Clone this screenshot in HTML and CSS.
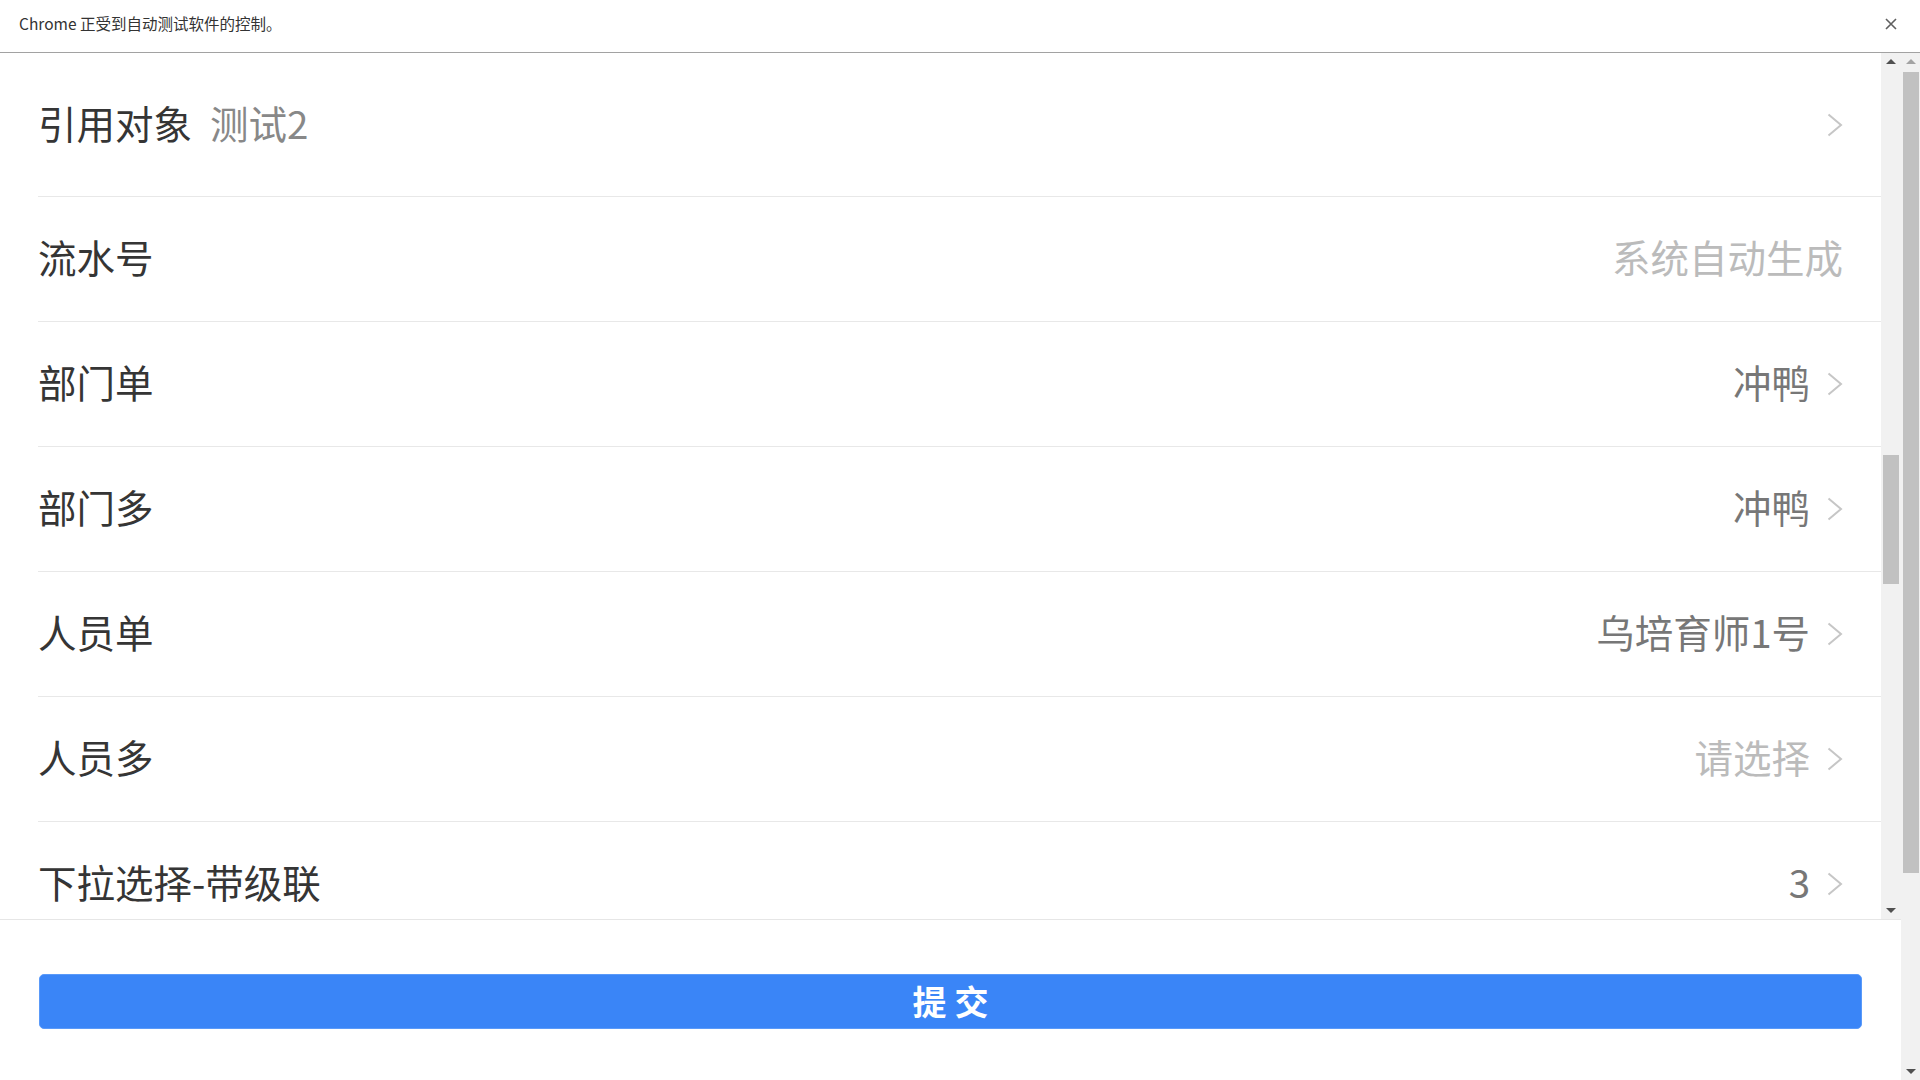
FILE: index.html
```html
<!DOCTYPE html>
<html lang="zh-CN">
<head>
<meta charset="utf-8">
<title>表单</title>
<link rel="stylesheet" href="styles.css">
</head>
<body>
<div class="infobar">
  <span class="infobar-text">Chrome 正受到自动测试软件的控制。</span>
  <svg class="infobar-close" width="12" height="12" viewBox="0 0 12 12"><path d="M1 1L11 11M11 1L1 11" stroke="#5f5f5f" stroke-width="1.6" fill="none"/></svg>
</div>
<div class="window">
  <div class="page">
    <div class="list-wrap">
      <div class="list">
        <div class="item item-first">
          <div class="item-inner">
            <span class="label">引用对象</span>
            <span class="inline-value">测试2</span>
            <span class="spacer"></span>
            <svg class="chevron" width="16" height="24" viewBox="0 0 16 24"><polyline points="1.5,1.5 14,12 1.5,22.5" fill="none" stroke="#c6c6c6" stroke-width="2"/></svg>
          </div>
        </div>
        <div class="item">
          <div class="item-inner">
            <span class="label">流水号</span>
            <span class="spacer"></span>
            <span class="value placeholder">系统自动生成</span>
          </div>
        </div>
        <div class="item">
          <div class="item-inner">
            <span class="label">部门单</span>
            <span class="spacer"></span>
            <span class="value">冲鸭</span>
            <svg class="chevron" width="16" height="24" viewBox="0 0 16 24"><polyline points="1.5,1.5 14,12 1.5,22.5" fill="none" stroke="#c6c6c6" stroke-width="2"/></svg>
          </div>
        </div>
        <div class="item">
          <div class="item-inner">
            <span class="label">部门多</span>
            <span class="spacer"></span>
            <span class="value">冲鸭</span>
            <svg class="chevron" width="16" height="24" viewBox="0 0 16 24"><polyline points="1.5,1.5 14,12 1.5,22.5" fill="none" stroke="#c6c6c6" stroke-width="2"/></svg>
          </div>
        </div>
        <div class="item">
          <div class="item-inner">
            <span class="label">人员单</span>
            <span class="spacer"></span>
            <span class="value">乌培育师1号</span>
            <svg class="chevron" width="16" height="24" viewBox="0 0 16 24"><polyline points="1.5,1.5 14,12 1.5,22.5" fill="none" stroke="#c6c6c6" stroke-width="2"/></svg>
          </div>
        </div>
        <div class="item">
          <div class="item-inner">
            <span class="label">人员多</span>
            <span class="spacer"></span>
            <span class="value placeholder">请选择</span>
            <svg class="chevron" width="16" height="24" viewBox="0 0 16 24"><polyline points="1.5,1.5 14,12 1.5,22.5" fill="none" stroke="#c6c6c6" stroke-width="2"/></svg>
          </div>
        </div>
        <div class="item">
          <div class="item-inner">
            <span class="label">下拉选择-带级联</span>
            <span class="spacer"></span>
            <span class="value">3</span>
            <svg class="chevron" width="16" height="24" viewBox="0 0 16 24"><polyline points="1.5,1.5 14,12 1.5,22.5" fill="none" stroke="#c6c6c6" stroke-width="2"/></svg>
          </div>
        </div>
      </div>
      <div class="vscroll vscroll-inner">
        <div class="vs-btn"><span class="arrow-up"></span></div>
        <div class="vs-track"><div class="vs-thumb thumb-inner"></div></div>
        <div class="vs-btn"><span class="arrow-down"></span></div>
      </div>
    </div>
    <div class="footer">
      <button class="submit">提交</button>
    </div>
  </div>
  <div class="vscroll vscroll-outer">
    <div class="vs-btn"><span class="arrow-up arrow-disabled"></span></div>
    <div class="vs-track"><div class="vs-thumb thumb-outer"></div></div>
    <div class="vs-btn"><span class="arrow-down"></span></div>
  </div>
</div>
</body>
</html>
```

FILE: styles.css
```css
* {
  box-sizing: border-box;
}

html, body {
  margin: 0;
  padding: 0;
  width: 1920px;
  height: 1080px;
  overflow: hidden;
  background: #ffffff;
  font-family: "Noto Sans CJK SC", "Noto Sans", sans-serif;
}

/* Chrome automation infobar */
.infobar {
  height: 53px;
  display: flex;
  align-items: center;
  justify-content: space-between;
  padding: 0 23px 0 19px;
  border-bottom: 1px solid #a2a2a2;
  box-shadow: 0 1px 1px rgba(0, 0, 0, 0.06);
  background: #ffffff;
}

.infobar-text {
  font-size: 15.5px;
  color: #333333;
  line-height: 1;
  padding-bottom: 4px;
}

.infobar-close {
  display: block;
  margin-bottom: 4px;
}

/* browser window content */
.window {
  display: flex;
  height: 1027px;
}

.page {
  flex: 1;
  display: flex;
  flex-direction: column;
  min-width: 0;
}

.list-wrap {
  height: 866px;
  display: flex;
  overflow: hidden;
}

.list {
  flex: 1;
  min-width: 0;
  overflow: hidden;
}

.item {
  padding-left: 38px;
  background: #ffffff;
}

.item-inner {
  height: 125px;
  display: flex;
  align-items: center;
  padding-right: 38px;
  border-bottom: 1px solid #e8e8e8;
}

.item-first .item-inner {
  height: 144px;
}

.label,
.inline-value,
.value {
  font-size: 38.5px;
  line-height: 1;
  white-space: nowrap;
  padding-bottom: 5px;
}

.label {
  color: #353535;
}

.inline-value {
  color: #888888;
  margin-left: 18px;
}

.spacer {
  flex: 1;
}

.value {
  color: #777777;
}

.value.placeholder {
  color: #bbbbbb;
}

.chevron {
  display: block;
  margin-left: 17px;
  flex: none;
}

/* footer */
.footer {
  flex: 1;
  border-top: 1px solid #e6e6e6;
  padding: 54px 39px 0 39px;
  background: #ffffff;
}

.submit {
  display: block;
  width: 100%;
  height: 55px;
  border: 1px solid #5a9af9;
  border-radius: 5px;
  background: #3a85f7;
  color: #ffffff;
  font-family: "Noto Sans CJK SC", sans-serif;
  font-size: 34px;
  font-weight: 700;
  line-height: 1;
  letter-spacing: 8px;
  text-indent: 8px;
  padding: 0 0 2px 0;
}

/* scrollbars */
.vscroll {
  display: flex;
  flex-direction: column;
  background: #f1f1f1;
  flex: none;
}

.vscroll-inner {
  width: 20px;
}

.vscroll-outer {
  width: 19px;
}

.vs-btn {
  height: 17px;
  display: flex;
  align-items: center;
  justify-content: center;
}

.vs-track {
  flex: 1;
  display: flex;
  flex-direction: column;
  align-items: center;
}

.vs-thumb {
  width: 16px;
  background: #c1c1c1;
}

.thumb-inner {
  margin-top: 385px;
  height: 129px;
}

.thumb-outer {
  margin-top: 2px;
  height: 801px;
  margin-left: 1px;
}

.arrow-up {
  width: 0;
  height: 0;
  border-left: 5px solid transparent;
  border-right: 5px solid transparent;
  border-bottom: 5px solid #505050;
}

.arrow-down {
  width: 0;
  height: 0;
  border-left: 5px solid transparent;
  border-right: 5px solid transparent;
  border-top: 5px solid #505050;
}

.arrow-up.arrow-disabled {
  border-bottom-color: #a3a3a3;
}
```
